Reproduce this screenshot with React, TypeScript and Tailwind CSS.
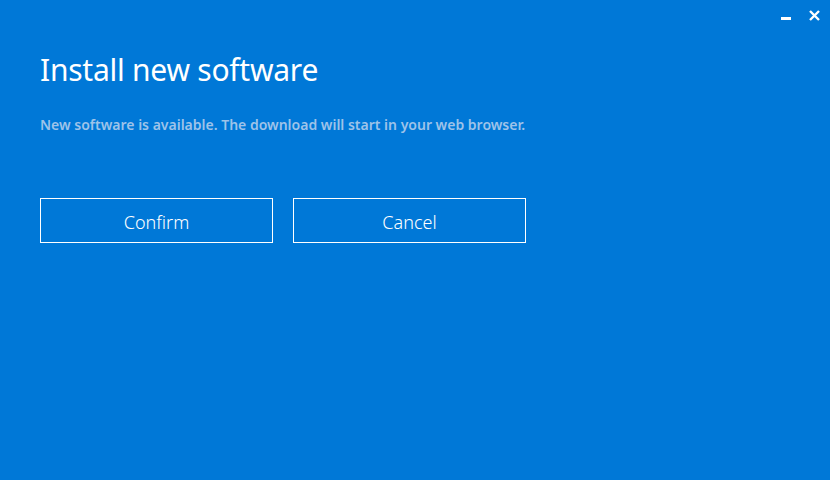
import React from "react";

export default function App() {
  return (
    <div
      className="relative w-[830px] h-[480px] bg-[#0078d7] text-white overflow-hidden"
      style={{ fontFamily: '"Noto Sans", "Open Sans", sans-serif' }}
    >
      <div className="absolute top-0 right-0 flex items-center h-[30px]">
        <button className="w-[28px] h-[30px] flex items-center justify-center">
          <span className="block w-[10px] h-[3px] bg-white mt-[6px]" />
        </button>
        <button className="w-[28px] h-[30px] flex items-center justify-center mr-[2px]">
          <svg width="11" height="11" viewBox="0 0 11 11">
            <path d="M1 1L10 10M10 1L1 10" stroke="white" strokeWidth="2.4" />
          </svg>
        </button>
      </div>

      <div className="px-[40px] pt-[50px]">
        <h1 className="text-[30px] leading-[40px] font-normal tracking-[-0.25px]">Install new software</h1>
        <p className="mt-[25px] text-[14px] leading-[20px] font-semibold text-[#9ec3e9]">
          New software is available. The download will start in your web browser.
        </p>
        <div className="flex gap-[20px] mt-[63px]">
          <button className="w-[233px] h-[45px] border border-white text-[18px] font-light pt-[3px]">
            Confirm
          </button>
          <button className="w-[233px] h-[45px] border border-white text-[18px] font-light pt-[3px]">
            Cancel
          </button>
        </div>
      </div>
    </div>
  );
}
